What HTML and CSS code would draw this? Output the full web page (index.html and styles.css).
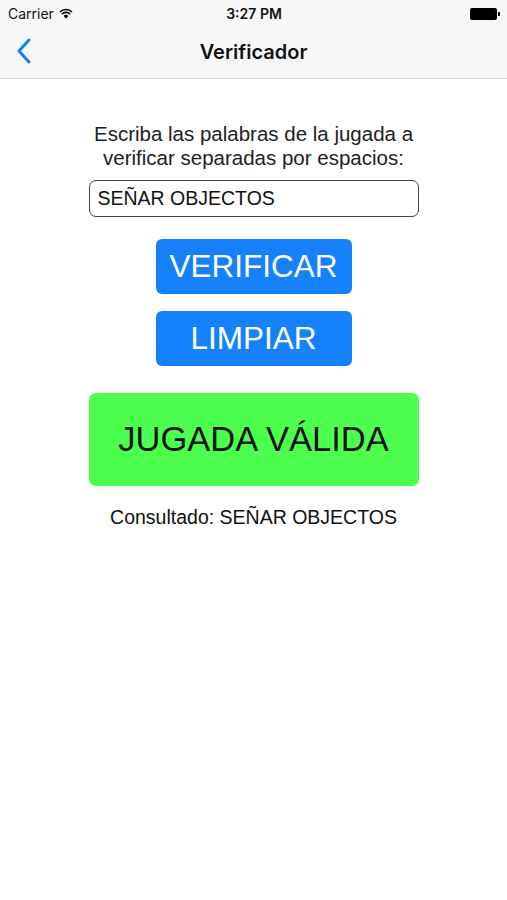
FILE: index.html
```html
<!DOCTYPE html>
<html>

<head>
    <meta charset='utf-8'>
    <title>Verificador</title>
    <meta name='viewport' content='width=device-width, initial-scale=1'>
    <link rel="stylesheet" href="styles.css">
</head>

<body>
    <header class="top">
        <div class="status-bar">
            <div class="carrier">
                Carrier
                <svg class="wifi" width="14" height="11" viewBox="0 0 14 11">
                    <path d="M7 10.5 L4.6 7.9 A3.4 3.4 0 0 1 9.4 7.9 Z" fill="#000"/>
                    <path d="M2.9 6.1 A5.8 5.8 0 0 1 11.1 6.1" fill="none" stroke="#000" stroke-width="1.6"/>
                    <path d="M1 4 A8.5 8.5 0 0 1 13 4" fill="none" stroke="#000" stroke-width="1.6"/>
                </svg>
            </div>
            <div class="clock">3:27 PM</div>
            <div class="battery">
                <span class="battery-body"></span>
                <span class="battery-nub"></span>
            </div>
        </div>
        <nav class="nav-bar">
            <a class="back" href="#">
                <svg width="18" height="26" viewBox="0 0 18 26">
                    <path d="M14 2 L4 13 L14 24" fill="none" stroke="#157efb" stroke-width="3" stroke-linecap="round" stroke-linejoin="round"/>
                </svg>
            </a>
            <h1>Verificador</h1>
        </nav>
    </header>

    <main class="content">
        <p class="prompt">Escriba las palabras de la jugada a verificar separadas por espacios:</p>
        <input class="words" type="text" value="SEÑAR OBJECTOS">
        <button class="action">VERIFICAR</button>
        <button class="action">LIMPIAR</button>
        <div class="result valid">JUGADA VÁLIDA</div>
        <p class="queried">Consultado: SEÑAR OBJECTOS</p>
    </main>
</body>

</html>
```

FILE: styles.css
```css
* {
    box-sizing: border-box;
}

html,
body {
    margin: 0;
    padding: 0;
    height: 100%;
    width: 100%;
    background-color: white;
    font-family: "Liberation Sans", Arial, sans-serif;
    color: #111;
}

/* status + navigation */
.top {
    background-color: #f7f7f7;
    border-bottom: 1px solid #d9d9d9;
    font-family: Inter, "Liberation Sans", sans-serif;
}

.status-bar {
    height: 25px;
    display: flex;
    align-items: center;
    justify-content: space-between;
    padding: 2px 7px 0 8px;
    font-size: 14px;
}

.carrier {
    flex: 1 1 0;
    display: flex;
    align-items: center;
    gap: 5px;
}

.clock {
    font-weight: 600;
}

.battery {
    flex: 1 1 0;
    display: flex;
    align-items: center;
    justify-content: flex-end;
}

.battery-body {
    width: 27px;
    height: 12px;
    background-color: #000;
    border-radius: 2px;
}

.battery-nub {
    width: 2px;
    height: 4px;
    background-color: #000;
    border-radius: 0 1px 1px 0;
    margin-left: 1px;
}

.nav-bar {
    height: 53px;
    display: flex;
    align-items: center;
    justify-content: center;
    position: relative;
}

.nav-bar h1 {
    margin: 0;
    font-size: 20px;
    font-weight: 600;
}

.back {
    position: absolute;
    left: 15px;
    top: 13px;
    display: flex;
}

/* content */
.content {
    display: flex;
    flex-direction: column;
    align-items: center;
    padding-top: 43px;
}

.prompt {
    margin: 0;
    width: 360px;
    text-align: center;
    font-size: 20.5px;
    line-height: 24px;
    color: #222;
}

.words {
    margin-top: 10px;
    width: 330px;
    height: 37px;
    border: 1.5px solid #444;
    border-radius: 7px;
    padding: 0 8px;
    font-family: "Liberation Sans", Arial, sans-serif;
    font-size: 19.5px;
    color: #111;
    background: white;
}

.action {
    margin-top: 22px;
    width: 196px;
    height: 55px;
    border: none;
    border-radius: 6px;
    background-color: #1581fb;
    color: white;
    font-family: "Liberation Sans", Arial, sans-serif;
    font-size: 31.5px;
}

.action + .action {
    margin-top: 17px;
}

.result {
    margin-top: 27px;
    width: 330px;
    height: 93px;
    border-radius: 7px;
    display: flex;
    align-items: center;
    justify-content: center;
    font-size: 34.5px;
    color: #111;
}

.valid {
    background-color: #4cff4f;
}

.queried {
    margin: 20px 0 0;
    font-size: 19.5px;
    color: #111;
}
```
